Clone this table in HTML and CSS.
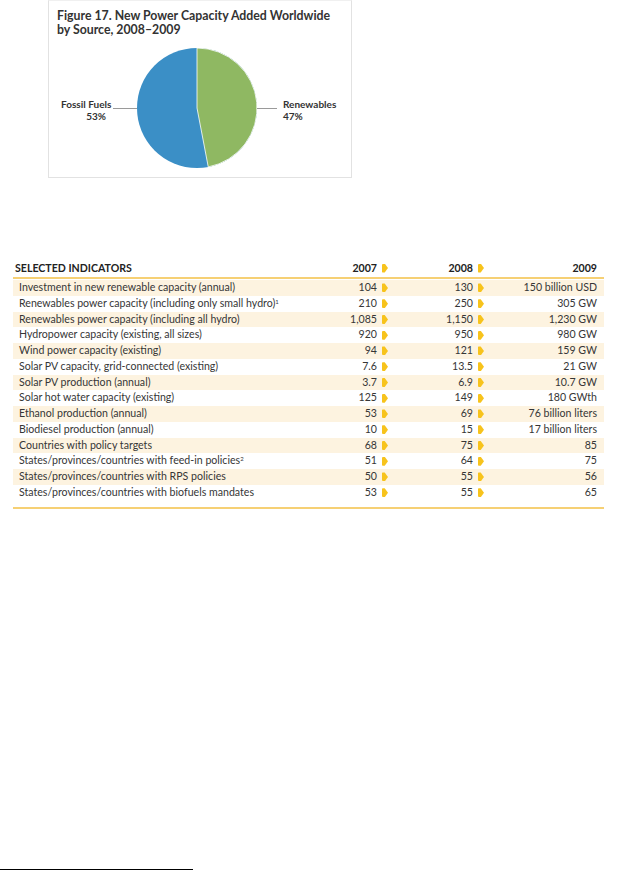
FILE: index.html
```html
<!DOCTYPE html>
<html>
<head>
<meta charset="utf-8">
<link rel="stylesheet" href="styles.css">
</head>
<body>
<div class="figure">
  <div class="fig-title">Figure 17. New Power Capacity Added Worldwide<br>by Source, 2008–2009</div>
  <div class="chart">
    <div class="lbl lbl-left">Fossil Fuels<br>53%</div>
    <div class="leader leader-left"></div>
    <svg class="pie" width="120" height="120" viewBox="0 0 120 120">
      <circle cx="60" cy="60" r="60" fill="#3b8fc6"/>
      <path d="M60 60 L60 0 A60 60 0 0 1 71.25 118.94 Z" fill="#8fb862" stroke="#ffffff" stroke-width="0.8"/>
    </svg>
    <div class="leader leader-right"></div>
    <div class="lbl lbl-right">Renewables<br>47%</div>
  </div>
</div>

<div class="table">
  <div class="row head">
    <div class="c-name">SELECTED INDICATORS</div>
    <div class="c-num">2007<span class="arr"></span></div>
    <div class="c-num c-08">2008<span class="arr"></span></div>
    <div class="c-last">2009</div>
  </div>
  <div class="row band"><div class="c-name">Investment in new renewable capacity (annual)</div><div class="c-num">104<span class="arr"></span></div><div class="c-num c-08">130<span class="arr"></span></div><div class="c-last">150 billion USD</div></div>
  <div class="row"><div class="c-name">Renewables power capacity (including only small hydro)<sup>1</sup></div><div class="c-num">210<span class="arr"></span></div><div class="c-num c-08">250<span class="arr"></span></div><div class="c-last">305 GW</div></div>
  <div class="row band"><div class="c-name">Renewables power capacity (including all hydro)</div><div class="c-num">1,085<span class="arr"></span></div><div class="c-num c-08">1,150<span class="arr"></span></div><div class="c-last">1,230 GW</div></div>
  <div class="row"><div class="c-name">Hydropower capacity (existing, all sizes)</div><div class="c-num">920<span class="arr"></span></div><div class="c-num c-08">950<span class="arr"></span></div><div class="c-last">980 GW</div></div>
  <div class="row band"><div class="c-name">Wind power capacity (existing)</div><div class="c-num">94<span class="arr"></span></div><div class="c-num c-08">121<span class="arr"></span></div><div class="c-last">159 GW</div></div>
  <div class="row"><div class="c-name">Solar PV capacity, grid-connected (existing)</div><div class="c-num">7.6<span class="arr"></span></div><div class="c-num c-08">13.5<span class="arr"></span></div><div class="c-last">21 GW</div></div>
  <div class="row band"><div class="c-name">Solar PV production (annual)</div><div class="c-num">3.7<span class="arr"></span></div><div class="c-num c-08">6.9<span class="arr"></span></div><div class="c-last">10.7 GW</div></div>
  <div class="row"><div class="c-name">Solar hot water capacity (existing)</div><div class="c-num">125<span class="arr"></span></div><div class="c-num c-08">149<span class="arr"></span></div><div class="c-last">180 GWth</div></div>
  <div class="row band"><div class="c-name">Ethanol production (annual)</div><div class="c-num">53<span class="arr"></span></div><div class="c-num c-08">69<span class="arr"></span></div><div class="c-last">76 billion liters</div></div>
  <div class="row"><div class="c-name">Biodiesel production (annual)</div><div class="c-num">10<span class="arr"></span></div><div class="c-num c-08">15<span class="arr"></span></div><div class="c-last">17 billion liters</div></div>
  <div class="row band"><div class="c-name">Countries with policy targets</div><div class="c-num">68<span class="arr"></span></div><div class="c-num c-08">75<span class="arr"></span></div><div class="c-last">85</div></div>
  <div class="row"><div class="c-name">States/provinces/countries with feed-in policies<sup>2</sup></div><div class="c-num">51<span class="arr"></span></div><div class="c-num c-08">64<span class="arr"></span></div><div class="c-last">75</div></div>
  <div class="row band"><div class="c-name">States/provinces/countries with RPS policies</div><div class="c-num">50<span class="arr"></span></div><div class="c-num c-08">55<span class="arr"></span></div><div class="c-last">56</div></div>
  <div class="row"><div class="c-name">States/provinces/countries with biofuels mandates</div><div class="c-num">53<span class="arr"></span></div><div class="c-num c-08">55<span class="arr"></span></div><div class="c-last">65</div></div>
</div>

<div class="footrule"></div>
</body>
</html>
```

FILE: styles.css
```css
html, body {
  margin: 0;
  padding: 0;
  background: #ffffff;
}
body {
  width: 630px;
  height: 872px;
  position: relative;
  font-family: Lato, "Open Sans", "Liberation Sans", sans-serif;
  color: #363636;
  overflow: hidden;
}
.figure {
  margin-left: 48px;
  width: 302px;
  height: 176px;
  border: 1px solid #e2e2e2;
  border-top-color: #f0f0f0;
  box-sizing: content-box;
}
.fig-title {
  padding: 8px 0 0 8px;
  font-size: 12.3px;
  line-height: 14px;
  font-weight: 700;
  color: #333333;
  white-space: nowrap;
}
.chart {
  display: flex;
  align-items: center;
  margin-top: 11px;
  padding-left: 12px;
}
.lbl {
  font-size: 10px;
  line-height: 11.5px;
  font-weight: 700;
  color: #333333;
  white-space: nowrap;
  margin-top: 5px;
}
.lbl-left {
  width: 45px;
  text-align: right;
  margin-right: 7px;
}
.lbl-right {
  margin-left: 6px;
}
.leader {
  height: 1px;
  background: #9a9a9a;
}
.leader-left { width: 24px; }
.leader-right { width: 20px; }
.pie { display: block; }

.table {
  margin: 81px 0 0 13px;
  width: 591px;
  padding-bottom: 6px;
  border-bottom: 2px solid #f6d074;
  font-size: 10.6px;
}
.row {
  display: grid;
  grid-template-columns: 297px 80px 96px 118px;
  height: 15.75px;
  align-items: center;
  line-height: 15.75px;
  white-space: nowrap;
}
.row.band { background: #fdf3e0; }
.row.head {
  height: 18px;
  line-height: 18px;
  font-weight: 700;
  color: #222222;
  border-bottom: 2px solid #f6d074;
  margin-bottom: 1px;
}
.c-name { padding-left: 6px; }
.head .c-name { padding-left: 2px; }
.c-num {
  display: flex;
  justify-content: flex-end;
  align-items: center;
  padding-right: 2px;
}
.c-last {
  text-align: right;
  padding-right: 7px;
}
.arr {
  display: inline-block;
  width: 6px;
  height: 9px;
  margin-left: 5px;
  background: #f7c31c;
  clip-path: polygon(0 0, 45% 0, 100% 50%, 45% 100%, 0 100%);
  border-radius: 1px;
}
sup {
  font-size: 6px;
  line-height: 0;
  vertical-align: 3px;
}
.footrule {
  position: absolute;
  left: 0;
  top: 869px;
  width: 193px;
  height: 1px;
  background: #000000;
}
```
